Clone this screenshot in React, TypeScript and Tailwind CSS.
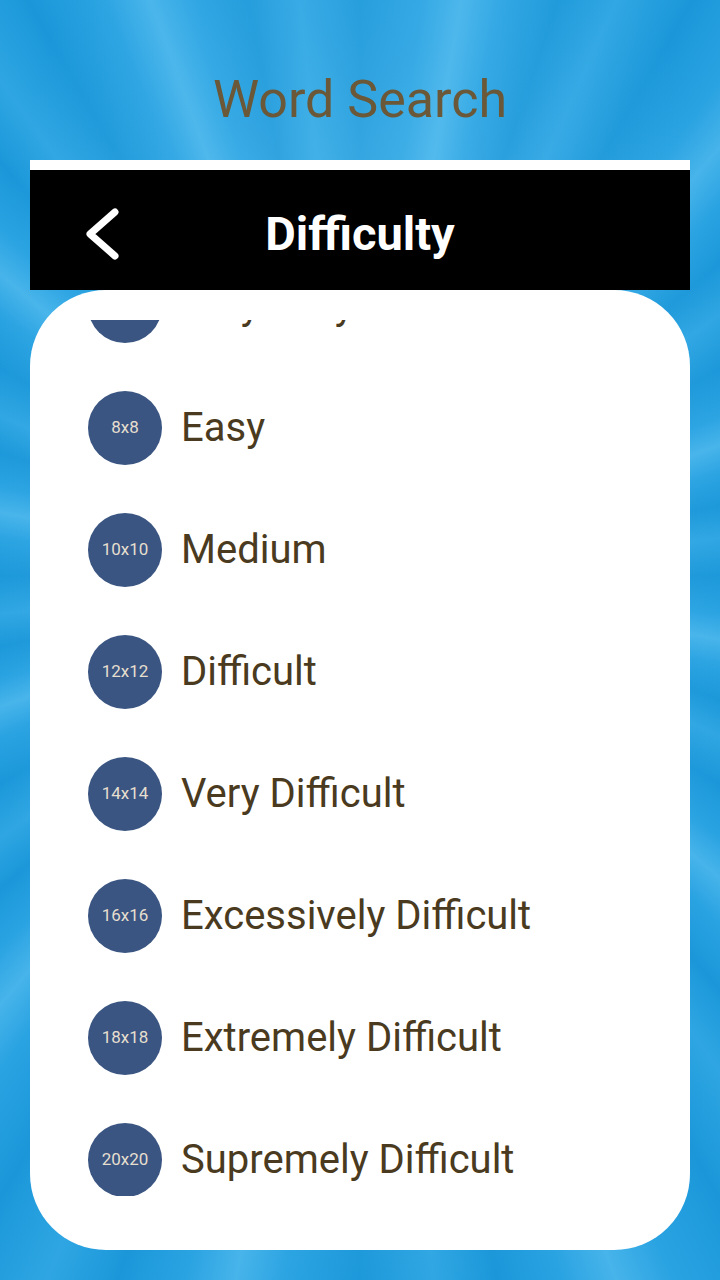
const levels = [
  { size: "6x6", label: "Very Easy" },
  { size: "8x8", label: "Easy" },
  { size: "10x10", label: "Medium" },
  { size: "12x12", label: "Difficult" },
  { size: "14x14", label: "Very Difficult" },
  { size: "16x16", label: "Excessively Difficult" },
  { size: "18x18", label: "Extremely Difficult" },
  { size: "20x20", label: "Supremely Difficult" },
];

const BackChevron = () => (
  <svg width="40" height="60" viewBox="0 0 40 60" fill="none">
    <polyline
      points="29,8 4,30 29,52"
      stroke="white"
      strokeWidth="7"
      strokeLinecap="round"
      strokeLinejoin="round"
    />
  </svg>
);

const LevelRow = ({ size, label }: { size: string; label: string }) => (
  <div className="flex h-[122px] items-center gap-[19px] pl-[58px]">
    <div className="flex h-[74px] w-[74px] shrink-0 items-center justify-center rounded-full bg-[#3a5582] text-[17px] text-[#e6dfcf]">
      {size}
    </div>
    <span className="text-[40px] text-[#4a3a20]">{label}</span>
  </div>
);

export default function App() {
  return (
    <div
      className="flex h-[1280px] w-[720px] flex-col overflow-hidden bg-[radial-gradient(ellipse_at_50%_40%,rgba(120,205,245,0.6),rgba(120,205,245,0.15)_45%,transparent_75%),repeating-conic-gradient(from_0deg_at_50%_45%,#1b97d9_0deg,#2aa3e2_6deg,#47b4ea_10deg,#2aa3e2_14deg,#1b97d9_19deg,#2fa6e3_24deg,#1b97d9_30deg)]"
      style={{ fontFamily: "Roboto, 'Noto Sans', sans-serif" }}
    >
      <div className="flex h-[160px] items-center justify-center pt-[40px]">
        <h1 className="text-[52px] text-[#6a5838]">Word Search</h1>
      </div>

      <div className="mx-[30px] grid h-[130px] grid-cols-[1fr_auto_1fr] items-center border-t-[10px] border-white bg-black pt-[8px]">
        <div className="pl-[56px]">
          <BackChevron />
        </div>
        <h2 className="text-[47px] font-bold text-white">Difficulty</h2>
        <div />
      </div>

      <div className="mx-[30px] h-[960px] rounded-[76px] bg-white pt-[30px]">
        <div className="h-[876px] overflow-hidden">
          <div className="mt-[-75px]">
            {levels.map((l) => (
              <LevelRow key={l.size} size={l.size} label={l.label} />
            ))}
          </div>
        </div>
      </div>
    </div>
  );
}
